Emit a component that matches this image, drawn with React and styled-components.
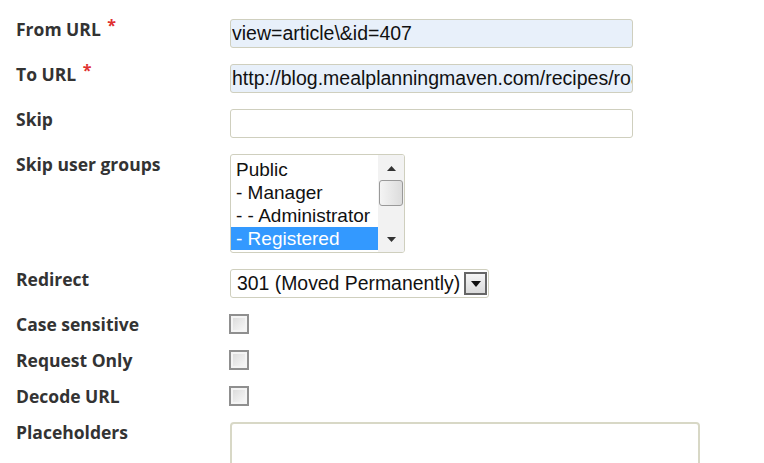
import React from "react";
import styled, { createGlobalStyle } from "styled-components";

const GlobalStyle = createGlobalStyle`
  body {
    margin: 0;
    background: #ffffff;
    font-family: "Liberation Sans", Arial, sans-serif;
  }
`;

const groups = [ "Public", "- Manager", "- - Administrator", "- Registered" ];

export default function App() {
  return (
    <>
      <GlobalStyle />
      <Form>
        <Label>From URL <Req>*</Req></Label>
        <TextField $filled readOnly value = "view=article\&id=407" />

        <Label>To URL <Req>*</Req></Label>
        <TextField $filled readOnly value = "http://blog.mealplanningmaven.com/recipes/roasted" />

        <Label>Skip</Label>
        <TextField readOnly value = "" />

        <Label>Skip user groups</Label>
        <ListBox>
          <ListItems>
            {groups.map( ( g, i ) => (
              <ListItem key = {i} $selected = {i === 3}>{g}</ListItem>
            ) )}
          </ListItems>
          <ScrollBar>
            <Arrow>
              <svg width = "9" height = "5" viewBox = "0 0 9 5"><path d = "M0 5 L4.5 0 L9 5 Z" fill = "#333" /></svg>
            </Arrow>
            <Thumb />
            <Track />
            <Arrow>
              <svg width = "9" height = "5" viewBox = "0 0 9 5"><path d = "M0 0 L4.5 5 L9 0 Z" fill = "#333" /></svg>
            </Arrow>
          </ScrollBar>
        </ListBox>

        <Label>Redirect</Label>
        <SelectBox>
          <SelectText>301 (Moved Permanently)</SelectText>
          <DropButton>
            <svg width = "10" height = "6" viewBox = "0 0 10 6"><path d = "M0 0 L5 6 L10 0 Z" fill = "#111" /></svg>
          </DropButton>
        </SelectBox>

        <Label>Case sensitive</Label>
        <Check />

        <Label>Request Only</Label>
        <Check />

        <Label>Decode URL</Label>
        <Check />

        <Label>Placeholders</Label>
        <TextArea />
      </Form>
    </>
  );
}


const Form = styled.div`
  display: grid;
  grid-template-columns: 214px 1fr;
  row-gap: 16px;
  padding: 19px 0 0 16px;
  align-items: start;
`;


const Label = styled.div`
  font-family: "Open Sans", "DejaVu Sans", sans-serif;
  font-weight: 700;
  font-size: 17.5px;
  line-height: 20px;
  color: #333333;
  white-space: nowrap;
`;


const Req = styled.span`
  color: #e03030;
  font-size: 16px;
  position: relative;
  top: -5px;
  margin-left: 2px;
`;


const TextField = styled.input`
  box-sizing: border-box;
  display: block;
  width: 403px;
  height: 29px;
  margin: 0;
  border: 1px solid #cfcfbe;
  border-radius: 3px;
  outline: none;
  background: ${p => p.$filled ? "#e8f0fa" : "#ffffff"};
  font-family: "Liberation Sans", Arial, sans-serif;
  font-size: 19.5px;
  color: #111;
  padding: 0 0 0 1px;
`;


const ListBox = styled.div`
  box-sizing: border-box;
  width: 175px;
  height: 99px;
  border: 1px solid #cfcfbe;
  border-radius: 3px;
  display: flex;
  overflow: hidden;
`;


const ListItems = styled.div`
  flex: 1;
  padding-top: 3px;
`;


const ListItem = styled.div`
  font-size: 19px;
  line-height: 23px;
  height: 23px;
  padding-left: 5px;
  color: ${p => p.$selected ? "#ffffff" : "#111"};
  background: ${p => p.$selected ? "#3399ff" : "transparent"};
  white-space: nowrap;
`;


const ScrollBar = styled.div`
  width: 26px;
  display: flex;
  flex-direction: column;
  background: #f2f2f2;
  padding: 2px 1px;
  box-sizing: border-box;
`;


const Arrow = styled.div`
  height: 22px;
  display: flex;
  align-items: center;
  justify-content: center;
`;


const Thumb = styled.div`
  height: 24px;
  margin: 1px 0;
  border: 1px solid #999;
  border-radius: 3px;
  background: linear-gradient(to right, #f4f4f4, #dcdcdc);
`;


const Track = styled.div`
  flex: 1;
`;


const SelectBox = styled.div`
  box-sizing: border-box;
  width: 259px;
  height: 29px;
  border: 1px solid #cfcfbe;
  border-radius: 3px;
  display: flex;
  align-items: center;
  padding: 0 1px 0 6px;
`;


const SelectText = styled.div`
  flex: 1;
  font-size: 19.4px;
  color: #111;
  white-space: nowrap;
`;


const DropButton = styled.div`
  box-sizing: border-box;
  width: 23px;
  height: 23px;
  border: 2px solid #666;
  background: linear-gradient(#f5f5f5, #dadada);
  display: flex;
  align-items: center;
  justify-content: center;
`;


const Check = styled.div`
  box-sizing: border-box;
  width: 20px;
  height: 20px;
  margin-left: -1px;
  border: 2px solid #8f8f8f;
  background: linear-gradient(135deg, #d8d8d8, #fbfbfb);
  box-shadow: inset 0 0 0 2px #f4f4f4;
`;


const TextArea = styled.div`
  box-sizing: border-box;
  width: 470px;
  height: 60px;
  border: 2px solid #d8d8c6;
  border-radius: 4px;
`;
